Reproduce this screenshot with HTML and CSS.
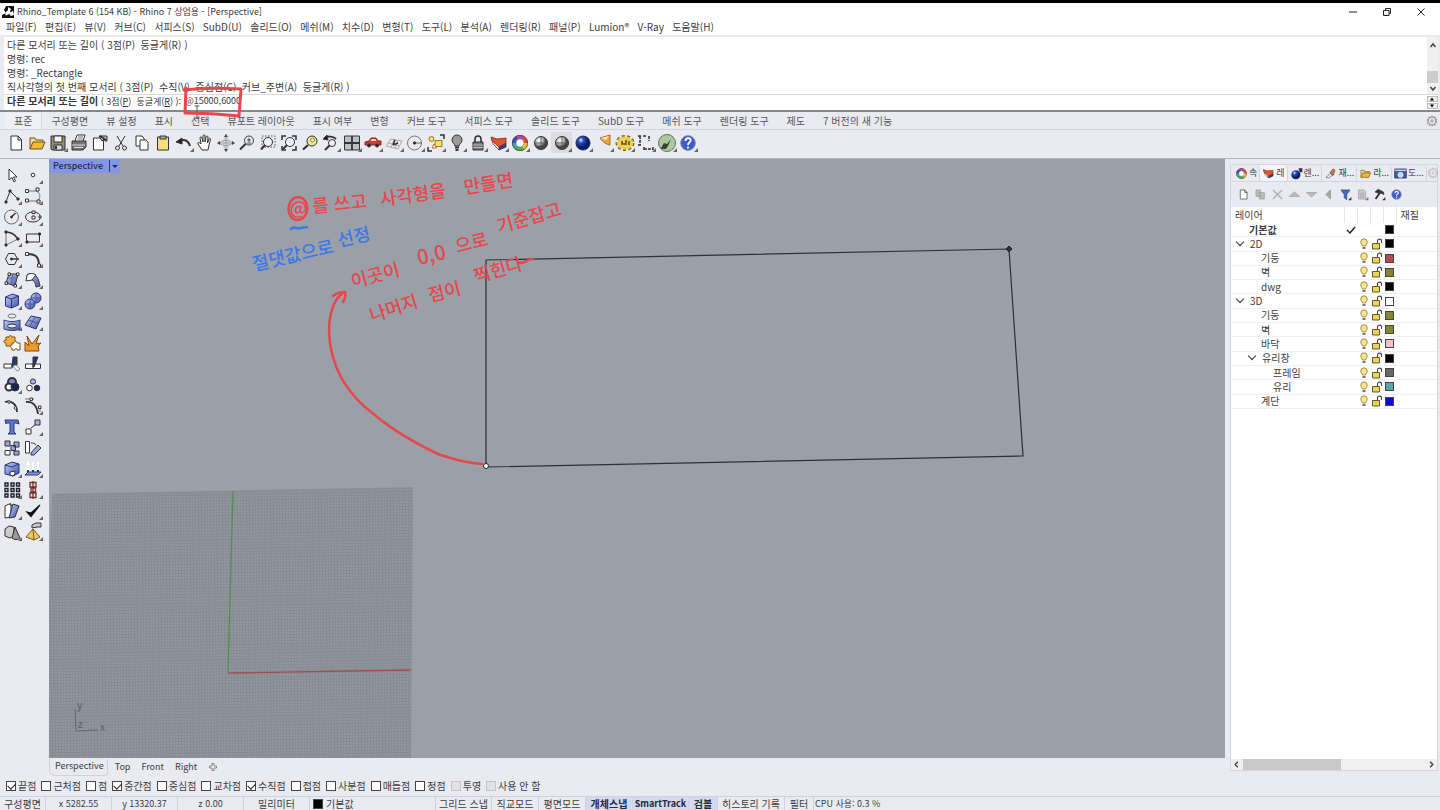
FILE: index.html
```
<!DOCTYPE html>
<html lang="ko">
<head>
  <meta charset="UTF-8">
  <meta name="viewport" content="width=device-width, initial-scale=1.0">
  <title>Rhino_Template 6 (154 KB) - Rhino 7 상업용 - [Perspective]</title>
  <link rel="stylesheet" href="styles.css">
</head>
<body>
  <!-- shared icons -->
  <svg class="defs" width="0" height="0">
    <symbol id="wheel" viewBox="0 0 20 20">
      <g fill="none" stroke-width="4">
        <circle cx="10" cy="10" r="6" stroke="#e0453a"/>
        <circle cx="10" cy="10" r="6" stroke="#e9c93c" pathLength="6" stroke-dasharray="1 5"/>
        <circle cx="10" cy="10" r="6" stroke="#4cb54a" pathLength="6" stroke-dasharray="1 5" stroke-dashoffset="-1"/>
        <circle cx="10" cy="10" r="6" stroke="#35a9b5" pathLength="6" stroke-dasharray="1 5" stroke-dashoffset="-2"/>
        <circle cx="10" cy="10" r="6" stroke="#3c50c8" pathLength="6" stroke-dasharray="1 5" stroke-dashoffset="-3"/>
        <circle cx="10" cy="10" r="6" stroke="#b545ae" pathLength="6" stroke-dasharray="1 5" stroke-dashoffset="-4"/>
      </g>
      <circle cx="10" cy="10" r="7.6" fill="none" stroke="#444" stroke-width=".7"/>
      <circle cx="10" cy="10" r="4" fill="#fff" stroke="#777" stroke-width=".6"/>
    </symbol>
    <symbol id="wedge" viewBox="0 0 20 20">
      <path d="M4 10l6 7 7-3v-4l-7 3z" fill="#2b3f9c" stroke="#222" stroke-width=".7"/>
      <path d="M3 6l7 7v4L4 11z" fill="#eee" stroke="#222" stroke-width=".6"/>
      <path d="M2 4l6 2 9-1v5l-7 4-7-6z" fill="#e2562c" stroke="#722" stroke-width=".8"/>
    </symbol>
    <symbol id="folder" viewBox="0 0 20 20">
      <path d="M3 16V5h5l1 2h7v3" fill="#f6dc8c" stroke="#6b5417"/>
      <path d="M3 16l3-7h12l-3 7z" fill="#f2b83c" stroke="#6b5417"/>
    </symbol>
    <symbol id="help" viewBox="0 0 20 20">
      <circle cx="10" cy="10" r="7.4" fill="#3f5cc4" stroke="#8794c9"/>
      <path d="M7.5 8c0-4 5.500-3.500 5.200-.5C12.500 9.500 10 9.500 10 12M10 13.500v2" fill="none" stroke="#fff" stroke-width="1.800"/>
    </symbol>
    <symbol id="bulb" viewBox="0 0 12 12">
      <path d="M4.500 8C4 6.500 2.800 6 2.800 4a3.200 3.200 0 0 1 6.400 0c0 2-1.200 2.500-1.700 4z" fill="#f8e68c" stroke="#8a7430" stroke-width=".8"/>
      <path d="M4.500 9h3v2h-3z" fill="#777"/>
    </symbol>
    <symbol id="unlock" viewBox="0 0 12 12">
      <path d="M1.500 5.500h7v5.500h-7z" fill="#ecd35c" stroke="#54481a" stroke-width=".9"/>
      <path d="M6.500 5V3c0-2.500 4-2.500 4 0v2" fill="none" stroke="#444" stroke-width="1.100"/>
    </symbol>
    <symbol id="gear" viewBox="0 0 12 12">
      <circle cx="6" cy="6" r="4.500" fill="none" stroke="#999" stroke-width="1.500" stroke-dasharray="2 .8"/>
      <circle cx="6" cy="6" r="3.700" fill="none" stroke="#999" stroke-width=".8"/>
      <circle cx="6" cy="6" r="1.200" fill="none" stroke="#999"/>
    </symbol>
    <linearGradient id="blue" x2="1" y2="1"><stop offset="0" stop-color="#c6d0fa"/><stop offset="1" stop-color="#3c51ab"/></linearGradient>
    <radialGradient id="ball" cx=".35" cy=".3"><stop offset="0" stop-color="#fff"/><stop offset=".6" stop-color="#b5b5b5"/><stop offset="1" stop-color="#444"/></radialGradient>
    <radialGradient id="blueball" cx=".35" cy=".3"><stop offset="0" stop-color="#dbe8ff"/><stop offset=".4" stop-color="#2751c0"/><stop offset="1" stop-color="#071d68"/></radialGradient>
  </svg>

  <header class="titlebar">
    <svg class="logo" viewBox="0 0 12 12"><path d="M0 0h12v12H0z" fill="#111"/><path d="M0 0h4L2 4l2 3-4 2zM6 1l3 2-1 3 3-1 1 4-3 1-2-2-4 2 1-4 2-2z" fill="#fff"/><path d="M3 9l3 2H2zM8 4l2 1-1 1z" fill="#111"/></svg>
    <span class="title">Rhino_Template 6 (154 KB) - Rhino 7 상업용 - [Perspective]</span>
    <div class="window-buttons">
      <button aria-label="최소화"><svg viewBox="0 0 10 10"><path d="M1 5h8"/></svg></button>
      <button aria-label="이전 크기로"><svg viewBox="0 0 10 10"><path d="M1.500 3.500h5.500v5H1.500zM3.500 3V1.500h5v5H7"/></svg></button>
      <button aria-label="닫기"><svg viewBox="0 0 10 10"><path d="M1.500 1.500l7 7M8.500 1.500l-7 7"/></svg></button>
    </div>
  </header>

  <div class="menubar">
    <nav class="menu">
      <a href="#">파일(F)</a><a href="#">편집(E)</a><a href="#">뷰(V)</a><a href="#">커브(C)</a><a href="#">서피스(S)</a><a href="#">SubD(U)</a><a href="#">솔리드(O)</a><a href="#">메쉬(M)</a><a href="#">치수(D)</a><a href="#">변형(T)</a><a href="#">도구(L)</a><a href="#">분석(A)</a><a href="#">렌더링(R)</a><a href="#">패널(P)</a><a href="#">Lumion®</a><a href="#">V-Ray</a><a href="#">도움말(H)</a>
    </nav>
  </div>

  <section class="command">
    <div class="history-row">
      <div class="history">
        <p>다른 모서리 또는 길이 ( 3점(P)&nbsp; 둥글게(R) )</p>
        <p>명령: rec</p>
        <p>명령: _Rectangle</p>
        <p>직사각형의 첫 번째 모서리 ( 3점(P)&nbsp; 수직(V)&nbsp; 중심점(C)&nbsp; 커브_주변(A)&nbsp; 둥글게(R) )</p>
      </div>
      <div class="vscroll">
        <svg viewBox="0 0 12 8"><path d="M3.500 6L6 3l2.500 3"/></svg>
        <div class="thumb"></div>
        <svg viewBox="0 0 12 8"><path d="M3.500 2L6 5l2.500-3"/></svg>
      </div>
    </div>
    <div class="prompt">
      <label for="cmd"><b>다른 모서리 또는 길이</b> ( 3점(<u>P</u>)&nbsp; 둥글게(<u>R</u>) ):</label>
      <input id="cmd" type="text" value="@15000,6000">
      <div class="spin">
        <button aria-label="위"><svg viewBox="0 0 8 4"><path d="M2 3.500L4 .5l2 3z"/></svg></button>
        <button aria-label="아래"><svg viewBox="0 0 8 4"><path d="M2 .5L4 3.500l2-3z"/></svg></button>
      </div>
    </div>
    <svg class="mark" viewBox="180 84 66 40">
      <path d="M195 106h4M195 118h4M197 106v12" stroke="#555" stroke-width="1"/>
      <path d="M184 90c18-2 38-2 57-1l-2 27c-18-2-36-3-54-3l1-25" stroke="#e5474c" stroke-width="3"/>
    </svg>
  </section>

  <nav class="tabs">
    <a href="#" class="active">표준</a><a href="#">구성평면</a><a href="#">뷰 설정</a><a href="#">표시</a><a href="#">선택</a><a href="#">뷰포트 레이아웃</a><a href="#">표시 여부</a><a href="#">변형</a><a href="#">커브 도구</a><a href="#">서피스 도구</a><a href="#">솔리드 도구</a><a href="#">SubD 도구</a><a href="#">메쉬 도구</a><a href="#">렌더링 도구</a><a href="#">제도</a><a href="#">7 버전의 새 기능</a>
    <svg class="tabs-gear"><use href="#gear"/></svg>
  </nav>

  <div class="toolbar">
    <button class="tool" aria-label="새로 만들기"><svg viewBox="0 0 20 20"><path d="M5 3h7l3.500 3.500V17H5zM12 3v4h3.500" fill="#fff"/></svg></button>
    <button class="tool" aria-label="열기"><svg><use href="#folder"/></svg></button>
    <button class="tool more" aria-label="저장"><svg viewBox="0 0 20 20"><path d="M3 3h14v14H4l-1-1z" fill="#8e8e6e"/><path d="M6 3h8v6H6z" fill="#f3f3f3"/><path d="M6 12h8v5H6z" fill="#ddd"/><path d="M8 13v3" stroke-width="2"/></svg></button>
    <button class="tool" aria-label="인쇄"><svg viewBox="0 0 20 20"><path d="M6 8l2-6h8l-2 6" fill="#fff"/><path d="M3 8h14v6l-3 3H3z" fill="#777"/><path d="M3 12h13M5 14.500h9" stroke="#ddd"/><path d="M9 4h5M8.500 6h5" stroke-width=".7"/></svg></button>
    <button class="tool" aria-label="문서 속성"><svg viewBox="0 0 20 20"><path d="M3.500 5h10v12h-10z" fill="#fff"/><path d="M9 3h8v5h-2l-1-2-2 2z" fill="#ccc"/><path d="M10 3l6 4" stroke-width="2"/></svg></button>
    <button class="tool" aria-label="잘라내기"><svg viewBox="0 0 20 20"><path d="M6 3l6 10M14 3L8 13"/><circle cx="6.500" cy="15" r="2"/><circle cx="13.500" cy="15" r="2"/></svg></button>
    <button class="tool" aria-label="복사"><svg viewBox="0 0 20 20"><path d="M4 3h6l2 2v8H4z" fill="#fff"/><path d="M8 7h6l2 2v8H8z" fill="#fff"/></svg></button>
    <button class="tool" aria-label="붙여넣기"><svg viewBox="0 0 20 20"><path d="M4.500 4h11v13h-11z" fill="#f5dc74"/><path d="M7 3h6v3H7z" fill="#aaa"/></svg></button>
    <button class="tool more" aria-label="실행 취소"><svg viewBox="0 0 20 20"><path d="M5 9c4-4 9-2 11 4" stroke-width="2"/><path d="M2 9l6-4v6z" fill="#222"/></svg></button>
    <button class="tool" aria-label="이동"><svg viewBox="0 0 20 20"><path d="M7 17l-4-6c-1-2 1-2 3 0L5 5c0-1.500 1.500-1.500 2 0l1 4V3c0-1.500 2-1.500 2 0v6l1-5c.5-1.500 2-1 2 0l-.5 6 1.500-4c.5-1.500 2-.5 1.500.5L14 12l-1 5z" fill="#fff"/></svg></button>
    <button class="tool" aria-label="뷰 회전"><svg viewBox="0 0 20 20"><path d="M10 3v14M3 10h14" stroke="#999"/><ellipse cx="10" cy="10" rx="6" ry="2.500" stroke="#999"/><ellipse cx="10" cy="10" rx="2.500" ry="6" stroke="#bbb"/><path d="M8 4l2-3 2 3zM8 16l2 3 2-3zM4 8l-3 2 3 2zM16 8l3 2-3 2z" fill="#444" stroke="none"/></svg></button>
    <button class="tool" aria-label="확대/축소"><svg viewBox="0 0 20 20"><circle cx="12" cy="7.500" r="4.500" fill="#eef"/><path d="M12 5v4M10 7h4M10 10h4" stroke-width=".9"/><path d="M8.500 11L3 16.500" stroke-width="2"/></svg></button>
    <button class="tool" aria-label="창 확대"><svg viewBox="0 0 20 20"><path d="M4 3h13v11H4z" stroke-dasharray="1.500 1.500" stroke="#555"/><circle cx="10" cy="9" r="4.500" fill="#eef"/><path d="M7 12l-4 4.500" stroke-width="2"/></svg></button>
    <button class="tool" aria-label="범위 확대"><svg viewBox="0 0 20 20"><path d="M3 7V3h4M13 3h4v4M17 13v4h-4M7 17H3v-4" stroke-width="1.500"/><circle cx="11" cy="9" r="4.500" fill="#eef"/><path d="M8 12l-4 4" stroke-width="2"/></svg></button>
    <button class="tool" aria-label="선택 확대"><svg viewBox="0 0 20 20"><circle cx="12" cy="8" r="5" fill="#e9ea9a"/><circle cx="12.500" cy="7" r="2" fill="#fff45e" stroke="#888"/><path d="M8 12l-5 4.500" stroke-width="2.200"/></svg></button>
    <button class="tool more" aria-label="뷰 실행 취소"><svg viewBox="0 0 20 20"><path d="M4 5c3-2 8-2 11 1" stroke-width="2"/><path d="M2 6l4-4 1 5z" fill="#222"/><circle cx="11" cy="10" r="3.500" fill="#eef"/><path d="M8.500 12.500L4 17" stroke-width="2"/></svg></button>
    <button class="tool more" aria-label="4개 뷰포트"><svg viewBox="0 0 20 20"><path d="M2.500 3h15v14h-15z" fill="#bcc0c6"/><path d="M10 3v14M2.500 10h15" stroke-width="1.800"/></svg></button>
    <button class="tool more" aria-label="오른쪽 뷰"><svg viewBox="0 0 20 20"><path d="M2 12V9l4-1 2-3h5l2 3h3v4z" fill="#d6392f" stroke="#822"/><path d="M8.500 6h4l1 2h-6z" fill="#f6caca" stroke="none"/><circle cx="6" cy="12.500" r="1.500" fill="#222"/><circle cx="14" cy="12.500" r="1.500" fill="#222"/></svg></button>
    <button class="tool more" aria-label="구성평면 설정"><svg viewBox="0 0 20 20"><path d="M2 13l5-7 11 2-4 8zM4.500 10l11 3M10 6.500L7 14.500M14 7.500L11 15" stroke="#aaa"/><path d="M9 12l2-5M9 12l5-2" stroke-width="1.500"/></svg></button>
    <button class="tool more" aria-label="개체 스냅"><svg viewBox="0 0 20 20"><circle cx="9.500" cy="10" r="7" stroke="#777"/><path d="M9.500 10H17" stroke="#666"/><circle cx="9.500" cy="10" r="1.200" fill="#333"/></svg></button>
    <button class="tool more" aria-label="선택"><svg viewBox="0 0 20 20"><path d="M14 2h4v4M2 14v4h4" stroke-width="1.500"/><path d="M9 7.500h7v6H9z" fill="#f4df67" stroke="#997a1c"/><circle cx="5.500" cy="6" r="2.500" fill="#f6e26c" stroke="#997a1c"/><path d="M6 15l2-4 2.500 4z" fill="#fff" stroke="#c66b24"/></svg></button>
    <button class="tool more" aria-label="숨기기"><svg viewBox="0 0 20 20"><path d="M8 13c0-2-3-3-3-6a5 5 0 0 1 10 0c0 3-3 4-3 6z" fill="#9a9a9a"/><path d="M8 14.500h4M8.500 17h3" stroke-width="1.800"/></svg></button>
    <button class="tool more" aria-label="잠금"><svg viewBox="0 0 20 20"><path d="M5 9h10v8H5z" fill="#777"/><path d="M7 9V6c0-4 6-4 6 0v3" stroke-width="1.600"/><path d="M5 12h10M5 14.500h10" stroke="#ccc" stroke-width=".8"/></svg></button>
    <button class="tool more" aria-label="레이어"><svg><use href="#wedge"/></svg></button>
    <button class="tool more" aria-label="속성"><svg><use href="#wheel"/></svg></button>
    <button class="tool" aria-label="음영"><svg viewBox="0 0 20 20"><circle cx="10" cy="10" r="6.500" fill="url(#ball)"/><path d="M10 3.500v13M3.500 10h13" stroke="#555" stroke-width=".8"/></svg></button>
    <button class="tool more on" aria-label="음영 모드"><svg viewBox="0 0 20 20"><circle cx="10" cy="10" r="6.500" fill="url(#ball)"/><path d="M10 3.500v13M3.500 10h13" stroke="#555" stroke-width=".8"/></svg></button>
    <button class="tool more" aria-label="렌더링"><svg viewBox="0 0 20 20"><circle cx="10" cy="10" r="7" fill="url(#blueball)" stroke="#172b6a"/></svg></button>
    <button class="tool more" aria-label="스포트라이트"><svg viewBox="0 0 20 20"><path d="M6 5l10-3v10c-3 0-7-3-10-7z" fill="#eda43a" stroke="#97702e"/><path d="M7 5l8-2-3 4z" fill="#fae9bb" stroke="none"/></svg></button>
    <button class="tool more" aria-label="옵션"><svg viewBox="0 0 20 20"><ellipse cx="10" cy="10" rx="8" ry="6.500" stroke="#7a651d" stroke-width="3" stroke-dasharray="3 2.100"/><ellipse cx="10" cy="10" rx="7.500" ry="6" fill="#efd158" stroke="#e8c440" stroke-width="1.500" stroke-dasharray="3 1.800"/><path d="M7 8v3h3M11 7v5M14 8v4" stroke="#665315" stroke-width="1.600"/></svg></button>
    <button class="tool more" aria-label="치수"><svg viewBox="0 0 20 20"><path d="M4 3v9M2 3h4M2 12h4M7 3h3M13 3v5M8 16h9M8 14v4M17 14v4" stroke-width="1.500" stroke-dasharray="3 1"/></svg></button>
    <button class="tool more" aria-label="Grasshopper"><svg viewBox="0 0 20 20"><circle cx="10" cy="10" r="8.500" fill="#adc99d" stroke="#657065"/><path d="M4 15l3-5 3 1 4-5-3 7-2 3H5z" fill="#37413a" stroke="none"/></svg></button>
    <button class="tool more" aria-label="도움말"><svg><use href="#help"/></svg></button>
  </div>

  <main class="work">
    <aside class="sidebar">
      <button class="tool" aria-label="선택"><svg viewBox="0 0 20 20"><path d="M7 4v11l3-2.500 2 4.500 1.500-1-2-4H15z" fill="#fff"/></svg></button>
      <button class="tool more" aria-label="점"><svg viewBox="0 0 20 20"><circle cx="10" cy="10" r="1.800" fill="#fff"/></svg></button>
      <button class="tool more" aria-label="폴리라인"><svg viewBox="0 0 20 20"><path d="M4 16l4-11 8 8"/><path d="M3 15h2v2H3zM7 4h2v2H7zM15 12h2v2h-2z" fill="#333"/></svg></button>
      <button class="tool more" aria-label="커브"><svg viewBox="0 0 20 20"><path d="M4 5h9c5 2 5 8 1 10H5" stroke="#777"/><path d="M2.500 3.500h3v3h-3zM13 2h3v3h-3zM2.500 13h3v3h-3zM14 14h3v3h-3z" fill="#fff"/></svg></button>
      <button class="tool more" aria-label="원"><svg viewBox="0 0 20 20"><circle cx="9.500" cy="10" r="7" stroke="#666"/><path d="M9.500 10l4-4" stroke-width="1.500"/><circle cx="9.500" cy="10" r="1" fill="#333"/></svg></button>
      <button class="tool more" aria-label="타원"><svg viewBox="0 0 20 20"><ellipse cx="10" cy="10" rx="7.500" ry="5"/><path d="M9 9h3v3H9zM9 4h3v2.500H9zM16 9h2v2h-2z" fill="#fff"/></svg></button>
      <button class="tool more" aria-label="호"><svg viewBox="0 0 20 20"><path d="M4 4c7 0 10 4 12 7" stroke-width="1.500"/><path d="M4 4v13l12-6" stroke="#777"/><path d="M3 3h2v2H3zM15 10h2v2h-2zM3 16h2v2H3z" fill="#333"/></svg></button>
      <button class="tool more" aria-label="사각형"><svg viewBox="0 0 20 20"><path d="M3.500 6h13v8h-13z"/><path d="M3 13h2v2H3zM15.500 5h2v2h-2z" fill="#333"/></svg></button>
      <button class="tool more" aria-label="다각형"><svg viewBox="0 0 20 20"><path d="M3.500 10L6.500 4.500h6L15.500 10l-3 5.500h-6z"/><path d="M9 10h8" stroke-width="1.400"/><circle cx="9.500" cy="10" r="1" fill="#333"/></svg></button>
      <button class="tool more" aria-label="필릿"><svg viewBox="0 0 20 20"><path d="M4 5c8 0 12 2 12 12" stroke-width="1.900"/><path d="M2.500 3.500h3v3h-3zM14.500 15h3v3h-3z" fill="#fff"/></svg></button>
      <button class="tool more" aria-label="서피스"><svg viewBox="0 0 20 20"><path d="M7 4h9l-3 12-9-3z" fill="url(#blue)"/><path d="M11 4l-2 11M6 8h9" stroke="#667"/><path d="M6 3h2.500v2.500H6zM14.500 3H17v2.500h-2.500zM3 12h2.500v2.500H3zM12 14.500h2.500V17H12z" fill="#fff"/></svg></button>
      <button class="tool more" aria-label="돌출"><svg viewBox="0 0 20 20"><path d="M4 5c4-3 11-2 13 11l-4 1C12 10 9 9 5 10z" fill="url(#blue)"/><path d="M4 5c3-2 6-2 9 0L9 10l-6 1z" fill="#fff"/></svg></button>
      <button class="tool more" aria-label="상자"><svg viewBox="0 0 20 20"><path d="M3.500 6l7-3 6 2v9l-7 3-6-2z" fill="url(#blue)" stroke="#27357c"/><path d="M3.500 6l6 2v9M9.500 8l7-3" stroke="#27357c"/></svg></button>
      <button class="tool more" aria-label="부울"><svg viewBox="0 0 20 20"><circle cx="13" cy="7" r="5" fill="url(#blue)" stroke="#26357c"/><circle cx="7" cy="13" r="5" fill="url(#blue)" stroke="#26357c"/><path d="M2 13h10M7 8v10M13 2v9M9 7h9" stroke="#33448f" stroke-width=".7"/></svg></button>
      <button class="tool more" aria-label="투영"><svg viewBox="0 0 20 20"><ellipse cx="10" cy="4" rx="4" ry="2" stroke="#777"/><path d="M2 8c5 2 11 2 16 0v9c-5 2-11 2-16 0z" fill="url(#blue)" stroke="#33417a"/><ellipse cx="10" cy="14" rx="4.500" ry="2" fill="#dfe5fb"/></svg></button>
      <button class="tool more" aria-label="메쉬"><svg viewBox="0 0 20 20"><path d="M2 13l6-9 10 2-5 11z" fill="url(#blue)" stroke="#2d376b"/><path d="M5 8l10 3M12 5l-5 9" stroke="#4b568c"/></svg></button>
      <button class="tool" aria-label="결합"><svg viewBox="0 0 20 20"><path d="M4 4h3c0-2 3-2 3 0h3v4c2 0 2 3 0 3v2H4v-3c-3 0-3-3 0-3z" fill="#efae3c" stroke="#7b5112"/><path d="M10 10h2c0-2 3-2 3 0h3v7h-3c0-2-2-2-2 0h-3v-2c-2 0-2-3 0-3z" fill="#fff" stroke="#7b5112"/></svg></button>
      <button class="tool" aria-label="분해"><svg viewBox="0 0 20 20"><path d="M2 18V9l4 4L4 3l5 8 7-9-3 9 5-1-3 3 1 5z" fill="#ee9a31" stroke="#7b4a11"/></svg></button>
      <button class="tool" aria-label="트림"><svg viewBox="0 0 20 20"><path d="M2 10h8v4H2z" fill="#fff"/><path d="M11 3h4v8l-5 2z" fill="#26347e"/><path d="M11 12l3-1 4 4-3 2z" fill="#fff" stroke="#888"/></svg></button>
      <button class="tool" aria-label="분할"><svg viewBox="0 0 20 20"><path d="M2.500 10h15v4.500h-15z" fill="#fff"/><path d="M10 3h5l-4 10h-1z" fill="#26347e"/><path d="M10 10v4.500"/></svg></button>
      <button class="tool more" aria-label="그룹"><svg viewBox="0 0 20 20"><circle cx="10" cy="7" r="4" fill="#7c89cf" stroke-width="2"/><circle cx="7" cy="12" r="3.500" fill="#fff" stroke-width="2"/><circle cx="13" cy="12" r="4" fill="#1a2252"/></svg></button>
      <button class="tool" aria-label="그룹 해제"><svg viewBox="0 0 20 20"><circle cx="10" cy="6.500" r="2.600" fill="#a9b2e8"/><circle cx="6.500" cy="13" r="2.800" fill="#fff"/><circle cx="14" cy="13" r="2.800" fill="#1e2860"/></svg></button>
      <button class="tool" aria-label="커브 편집"><svg viewBox="0 0 20 20"><path d="M3 6c6-2 12 2 12 10" stroke-width="1.800"/><circle cx="7" cy="6" r="1.300" fill="#fff"/><circle cx="13.500" cy="12" r="1.300" fill="#fff"/></svg></button>
      <button class="tool more" aria-label="점 편집"><svg viewBox="0 0 20 20"><path d="M3 6c7-1 11 4 12 12" stroke-width="1.800"/><path d="M2 3h9M17 10v6" stroke="#777"/><path d="M7 2h2.500v2.500H7zM15.500 10H18v2.500h-2.500z" fill="#fff"/></svg></button>
      <button class="tool" aria-label="텍스트"><svg viewBox="0 0 20 20"><path d="M3 3h13l1 4-3-1h-2v9l2 2H6l2-2V6H5L4 7z" fill="#6076cd" stroke="#27357b"/></svg></button>
      <button class="tool more" aria-label="이동"><svg viewBox="0 0 20 20"><path d="M12 3h5v5h-5z" fill="#a8b2e3"/><path d="M3 12h5v5H3z" fill="#fff"/><path d="M8 11l4-3"/></svg></button>
      <button class="tool" aria-label="블록"><svg viewBox="0 0 20 20"><path d="M3 3h5v5H3zM12 4h5v5h-5zM9 7.500h4.500v5H9zM12 13h5v4h-5z" fill="#98a4df"/><path d="M3 12.500h5V17H3z" fill="#fff"/></svg></button>
      <button class="tool" aria-label="회전"><svg viewBox="0 0 20 20"><path d="M2.500 3.500h4V15h-4z" fill="#fff"/><path d="M8 15l7-8 3 3-7 7H8z" fill="#9aa8e6"/><path d="M8 5c2 0 4 0 5 2"/></svg></button>
      <button class="tool more" aria-label="솔리드 편집"><svg viewBox="0 0 20 20"><path d="M3 6l7-3 7 2v9l-6 3-8-2z" fill="url(#blue)" stroke="#27357c"/><path d="M3 6l7 2 7-3" stroke="#27357c"/><path d="M8 13l5-1v3l-2 2-3-1z" fill="#fff"/></svg></button>
      <button class="tool more" aria-label="배열"><svg viewBox="0 0 20 20"><path d="M5 3v9M10 3v9M15 3v9" stroke="#fff" stroke-width="2"/><path d="M2 16l3-3h13l-3 3z" fill="#8a99de" stroke="#27357c"/><path d="M4 12h2M9 12h2M14 12h2" stroke-width="2"/></svg></button>
      <button class="tool more" aria-label="격자 배열"><svg viewBox="0 0 20 20"><path d="M3 3h3v3H3zM9 3h3v3H9zM14.500 3h3v3h-3zM3 8.500h3v3H3zM9 8.500h3v3H9zM14.500 8.500h3v3h-3zM3 14h3v3H3zM9 14h3v3H9zM14.500 14h3v3h-3z" fill="#ccd" stroke="#223" stroke-width="1.400"/></svg></button>
      <button class="tool more" aria-label="정렬"><svg viewBox="0 0 20 20"><path d="M7 2.500h6v4.500H7zM8 8h4.500v4H8zM7 13h6v4.500H7zM10 1v18" fill="#f1dede" stroke="#713232" stroke-width="1.300"/></svg></button>
      <button class="tool more" aria-label="변형"><svg viewBox="0 0 20 20"><path d="M3 5l4-2 2 1v12l-6 1z" fill="#fff"/><path d="M11 3l6 2-4 11-6 1z" fill="url(#blue)"/><path d="M8 2l2 3"/></svg></button>
      <button class="tool more" aria-label="검사"><svg viewBox="0 0 20 20"><path d="M4 11l4 4.500L17 4l-9 8z" fill="#111" stroke="#111" stroke-width="1.200"/></svg></button>
      <button class="tool more" aria-label="도형"><svg viewBox="0 0 20 20"><path d="M3 7l4-3 5 1v9l-4 2-5-2z" fill="#ccc"/><path d="M13 5l5 11c-2 2-6 2-8 0z" fill="#999"/></svg></button>
      <button class="tool more" aria-label="피라미드"><svg viewBox="0 0 20 20"><path d="M10 7l7 8-6 3-8-3z" fill="#f0c760" stroke="#765b1e"/><path d="M10 7l1 11" stroke="#765b1e"/><path d="M9 3l4-2h5v4h-4l-5 1z" fill="#ccc"/></svg></button>
    </aside>

    <section class="viewport">
      <button class="view-title">Perspective <span class="caret"></span></button>
      <svg class="scene" viewBox="49 159 1176 599" preserveAspectRatio="xMinYMin slice">
        <defs>
          <pattern id="grid" width="3" height="3" patternUnits="userSpaceOnUse" patternTransform="rotate(-1)">
            <rect width="3" height="3" fill="#92979f"/>
            <path d="M0 .5h3M.5 0v3" stroke="#868b93"/>
          </pattern>
        </defs>
        <path d="M52 494l361-7-2 271H49V600z" fill="url(#grid)"/>
        <path d="M233 491l-5 182" stroke="#4f8f4c" stroke-width="1.300"/>
        <path d="M228 673l183-3" stroke="#a04e50" stroke-width="1.300"/>
        <path d="M75 709l1 22 22-1" stroke="#62666e" fill="none"/>
        <g class="axis"><text x="77" y="709">y</text><text x="78" y="728">z</text><text x="100" y="731">x</text></g>
        <path d="M486 260l523-11 14 207-537 11z" fill="none" stroke="#2e3034" stroke-width="1.200"/>
        <circle cx="486" cy="466" r="2.500" fill="#fff" stroke="#222"/>
        <path d="M1009 246l3 3-3 3-3-3z" fill="#333" stroke="#222"/>
        <g class="pen red">
          <text transform="translate(290 215) rotate(-3)">@</text>
          <text transform="translate(313 213) rotate(-6)">를 쓰고</text>
          <text transform="translate(381 206) rotate(-8)">사각형을</text>
          <text transform="translate(465 194) rotate(-9)">만들면</text>
          <text transform="translate(353 288) rotate(-15)">이곳이</text>
          <text transform="translate(419 265) rotate(-13)" class="big">0,0</text>
          <text transform="translate(457 253) rotate(-14)">으로</text>
          <text transform="translate(499 233) rotate(-16)">기준잡고</text>
          <text transform="translate(372 322) rotate(-18)">나머지</text>
          <text transform="translate(430 302) rotate(-14)">점이</text>
          <text transform="translate(476 283) rotate(-16)">찍힌다</text>
        </g>
        <g class="pen blue">
          <text transform="translate(254 271) rotate(-13)">절댓값으로</text>
          <text transform="translate(339 247) rotate(-13)">선정</text>
        </g>
        <g class="ink">
          <path d="M298 197c-12 1-13 22-1 23 13 0 14-22 1-23" stroke="#e5474c"/>
          <path d="M482 464c-16-1-30-5-44-10-25-12-44-23-62-38-30-22-46-50-47-85 0-15 4-31 13-37M333 296c4-3 7-4 12-4 1 4 0 7-2 10" stroke="#e5474c"/>
          <path d="M520 263c4 1 7-4 13-4" stroke="#e5474c"/>
          <path d="M291 229c4-4 6 1 9-1 3-1 5 0 7-1" stroke="#3a78e8"/>
        </g>
      </svg>
    </section>

    <aside class="panel">
      <nav class="panel-tabs">
        <a href="#"><svg><use href="#wheel"/></svg>속</a>
        <a href="#" class="active"><svg><use href="#wedge"/></svg>레</a>
        <a href="#"><svg viewBox="0 0 20 20"><circle cx="9" cy="12" r="7" fill="url(#blueball)"/><path d="M13 2h6v6h-4z" fill="#333"/></svg>렌...</a>
        <a href="#"><svg viewBox="0 0 20 20"><path d="M3 16l7-6 3 3-6 4z" fill="#eee" stroke="#555"/><path d="M9 9l5-6 3 2-3 8z" fill="#cf7657" stroke="#63301d"/></svg>재...</a>
        <a href="#"><svg><use href="#folder"/></svg>라...</a>
        <a href="#"><svg viewBox="0 0 20 20"><path d="M1 3h18v14H1z" fill="#405cab" stroke="#223"/><path d="M1 5h18" stroke="#dde" stroke-width="2"/><circle cx="10" cy="12" r="4" fill="#c9d2f5" stroke="#eee"/></svg>도...</a>
        <svg class="panel-gear"><use href="#gear"/></svg>
      </nav>
      <div class="panel-tools">
        <button aria-label="새 레이어"><svg viewBox="0 0 20 20"><path d="M5 3h7l3.500 3.500V17H5zM12 3v4h3.500" fill="#fff"/></svg></button>
        <button aria-label="복제"><svg viewBox="0 0 20 20"><path d="M3 3h7v10H3zM8 7h8v10H8z" fill="#bbb" stroke="#999"/></svg></button>
        <button aria-label="삭제"><svg viewBox="0 0 20 20"><path d="M3 3l14 14M17 3L3 17" stroke="#b5b5b8" stroke-width="2.500"/></svg></button>
        <button aria-label="위로"><svg viewBox="0 0 20 20"><path d="M2 13l8-7 8 7z" fill="#bbb" stroke="#999"/></svg></button>
        <button aria-label="아래로"><svg viewBox="0 0 20 20"><path d="M2 7l8 7 8-7z" fill="#bbb" stroke="#999"/></svg></button>
        <button aria-label="왼쪽"><svg viewBox="0 0 20 20"><path d="M13 3v14l-7-7z" fill="#aaa" stroke="#888"/></svg></button>
        <button aria-label="필터"><svg viewBox="0 0 20 20"><path d="M3 3h14l-5 7v8l-4-3v-5z" fill="#4b69bd" stroke="#263c83"/><path d="M19 14v5h-5z" fill="#333" stroke="none"/></svg></button>
        <button aria-label="목록"><svg viewBox="0 0 20 20"><path d="M4 3h8l3 3v11H4z" fill="#ccc" stroke="#999"/><path d="M6 8h7M6 11h7M6 14h7" stroke="#999"/><path d="M19 14v5h-5z" fill="#777" stroke="none"/></svg></button>
        <button aria-label="도구"><svg viewBox="0 0 20 20"><path d="M3 6l5-4 8 4 1 4-5-2-1 1z" fill="#333"/><path d="M10 8l-6 9" stroke-width="3"/><path d="M19 14v5h-5z" fill="#333" stroke="none"/></svg></button>
        <button aria-label="도움말"><svg><use href="#help"/></svg></button>
      </div>
      <div class="layers">
        <table>
          <thead>
            <tr><th class="name">레이어</th><th class="c"></th><th class="c"></th><th class="c"></th><th class="c"></th><th>재질</th></tr>
          </thead>
          <tbody>
            <tr><td class="l1"><b>기본값</b></td><td><svg viewBox="0 0 12 12"><path d="M2 6l3 3 5-6" fill="none" stroke="#222" stroke-width="1.500"/></svg></td><td></td><td></td><td><i class="swatch black"></i></td><td></td></tr>
            <tr><td class="l1 open">2D</td><td></td><td><svg><use href="#bulb"/></svg></td><td><svg><use href="#unlock"/></svg></td><td><i class="swatch black"></i></td><td></td></tr>
            <tr><td class="l2">기둥</td><td></td><td><svg><use href="#bulb"/></svg></td><td><svg><use href="#unlock"/></svg></td><td><i class="swatch brick"></i></td><td></td></tr>
            <tr><td class="l2">벽</td><td></td><td><svg><use href="#bulb"/></svg></td><td><svg><use href="#unlock"/></svg></td><td><i class="swatch olive"></i></td><td></td></tr>
            <tr><td class="l2">dwg</td><td></td><td><svg><use href="#bulb"/></svg></td><td><svg><use href="#unlock"/></svg></td><td><i class="swatch black"></i></td><td></td></tr>
            <tr><td class="l1 open">3D</td><td></td><td><svg><use href="#bulb"/></svg></td><td><svg><use href="#unlock"/></svg></td><td><i class="swatch white"></i></td><td></td></tr>
            <tr><td class="l2">기둥</td><td></td><td><svg><use href="#bulb"/></svg></td><td><svg><use href="#unlock"/></svg></td><td><i class="swatch olive"></i></td><td></td></tr>
            <tr><td class="l2">벽</td><td></td><td><svg><use href="#bulb"/></svg></td><td><svg><use href="#unlock"/></svg></td><td><i class="swatch olive"></i></td><td></td></tr>
            <tr><td class="l2">바닥</td><td></td><td><svg><use href="#bulb"/></svg></td><td><svg><use href="#unlock"/></svg></td><td><i class="swatch pink"></i></td><td></td></tr>
            <tr><td class="l2 open">유리창</td><td></td><td><svg><use href="#bulb"/></svg></td><td><svg><use href="#unlock"/></svg></td><td><i class="swatch black"></i></td><td></td></tr>
            <tr><td class="l3">프레임</td><td></td><td><svg><use href="#bulb"/></svg></td><td><svg><use href="#unlock"/></svg></td><td><i class="swatch gray"></i></td><td></td></tr>
            <tr><td class="l3">유리</td><td></td><td><svg><use href="#bulb"/></svg></td><td><svg><use href="#unlock"/></svg></td><td><i class="swatch teal"></i></td><td></td></tr>
            <tr><td class="l2">계단</td><td></td><td><svg><use href="#bulb"/></svg></td><td><svg><use href="#unlock"/></svg></td><td><i class="swatch navy"></i></td><td></td></tr>
          </tbody>
        </table>
      </div>
      <div class="hscroll">
        <svg viewBox="0 0 12 12"><path d="M7 3L4 6l3 3"/></svg>
        <div class="track"><div class="thumb"></div></div>
        <svg viewBox="0 0 12 12"><path d="M5 3l3 3-3 3"/></svg>
      </div>
    </aside>
  </main>

  <nav class="view-tabs">
    <a href="#" class="active">Perspective</a><a href="#">Top</a><a href="#">Front</a><a href="#">Right</a>
    <button aria-label="뷰포트 추가"><svg viewBox="0 0 10 10"><path d="M4 1.500h2V4h2.500v2H6v2.500H4V6H1.500V4H4z" fill="#eee" stroke="#888"/></svg></button>
  </nav>

  <form class="osnap">
    <label><input type="checkbox" checked>끝점</label>
    <label><input type="checkbox">근처점</label>
    <label><input type="checkbox">점</label>
    <label><input type="checkbox" checked>중간점</label>
    <label><input type="checkbox">중심점</label>
    <label><input type="checkbox">교차점</label>
    <label><input type="checkbox" checked>수직점</label>
    <label><input type="checkbox">접점</label>
    <label><input type="checkbox">사분점</label>
    <label><input type="checkbox">매듭점</label>
    <label><input type="checkbox">정점</label>
    <label><input type="checkbox" disabled>투영</label>
    <label><input type="checkbox" disabled>사용 안 함</label>
  </form>

  <footer class="status">
    <button class="w-plane">구성평면</button>
    <span class="w-coord small">x 5282.55</span>
    <span class="w-coord small">y 13320.37</span>
    <span class="w-coord small">z 0.00</span>
    <span class="w-coord">밀리미터</span>
    <button class="w-layer"><i class="swatch black"></i>기본값</button>
    <button class="w-wide">그리드 스냅</button>
    <button class="w-mode">직교모드</button>
    <button class="w-mode">평면모드</button>
    <button class="w-mode active">개체스냅</button>
    <button class="w-wide small active">SmartTrack</button>
    <button class="w-short active">검볼</button>
    <button class="w-history">히스토리 기록</button>
    <button class="w-short">필터</button>
    <span class="cpu small">CPU 사용: 0.3 %</span>
  </footer>
</body>
</html>
```
FILE: styles.css
```
* {
  box-sizing: border-box;
}
body {
  display: flex;
  flex-direction: column;
  height: 100vh;
  margin: 0;
  border-top: 3px solid #000;
  background-color: #eaebf1;
  color: #3c3d42;
  font-family: "Noto Sans CJK KR", sans-serif;
  font-size: 10px;
  line-height: 14px;
  overflow: hidden;
}
.defs {
  position: absolute;
}
a {
  color: inherit;
  text-decoration: none;
  white-space: nowrap;
}
button, input {
  margin: 0;
  padding: 0;
  border: none;
  background: none;
  color: inherit;
  font: inherit;
}
svg {
  display: block;
  flex: none;
}

/* title and menu */
.titlebar {
  display: flex;
  align-items: center;
  height: 17px;
  padding: 0 11px 0 2px;
  background-color: #fff;
}
.logo {
  width: 12px;
  height: 12px;
  margin-right: 3px;
}
.title {
  flex: 1;
  font-size: 9px;
}
.window-buttons {
  display: flex;
  gap: 24px;
  padding-right: 3px;
}
.window-buttons svg {
  width: 10px;
  height: 10px;
  fill: none;
  stroke: #222;
}
.menubar {
  padding: 0 6px 1px;
  background-color: #fff;
}
.menu {
  display: flex;
  justify-content: space-between;
  max-width: 708px;
}

/* command line */
.command {
  position: relative;
  padding: 2px 2px 0 4px;
  border-bottom: 2px solid #85868e;
}
.history-row {
  display: flex;
}
.history {
  flex: 1;
  padding: 1px 3px 0;
  background-color: #fff;
}
.history p {
  margin: 0;
}
.vscroll {
  display: flex;
  flex-direction: column;
  justify-content: space-between;
  align-items: center;
  width: 11px;
  padding: 4px 0 1px;
  background-color: #f0f0f0;
}
.vscroll svg {
  width: 12px;
  height: 8px;
}
.vscroll svg, .hscroll svg {
  fill: none;
  stroke: #444;
  stroke-width: 1.5;
}
.vscroll .thumb {
  width: 11px;
  height: 12px;
  margin-top: auto;
  margin-bottom: 2px;
  background-color: #cdcdcd;
}
.prompt {
  display: flex;
  align-items: flex-start;
  height: 16px;
  padding-left: 3px;
  border-top: 1px solid #d8d8de;
  background-color: #fff;
  font-size: 9px;
  line-height: 12px;
}
.prompt label {
  color: #333;
}
.prompt b {
  font-size: 10px;
}
.prompt input {
  flex: 1;
  height: 12px;
  margin-left: 4px;
  outline: none;
}
.spin {
  display: flex;
  flex-direction: column;
  gap: 1px;
  padding-top: 1px;
}
.spin button {
  width: 11px;
  height: 6px;
  border: 1px solid #bbb;
  background-color: #eee;
}
.spin svg {
  width: 8px;
  height: 4px;
}
.mark {
  position: absolute;
  z-index: 2;
  top: 49px;
  left: 180px;
  width: 66px;
  height: 40px;
  fill: none;
  stroke-linecap: round;
  stroke-linejoin: round;
  pointer-events: none;
}

/* toolbar tabs */
.tabs {
  display: flex;
  gap: 18px;
  align-items: center;
  padding: 1px 2px 0 5px;
  border-bottom: 1px solid #d3d4dc;
  color: #55565c;
}
.tabs a {
  padding: 1px 0;
}
.tabs .active {
  margin-right: -9px;
  padding: 1px 9px;
  border-right: 1px solid #d3d4dc;
  background-color: #eff0f5;
}
.tabs-gear, .panel-gear {
  width: 12px;
  height: 12px;
  margin-left: auto;
}
.toolbar {
  display: flex;
  padding: 2px 5px 5px;
  border-bottom: 1px solid #b3b5c6;
}
.tool {
  position: relative;
  display: flex;
  align-items: center;
  justify-content: center;
  width: 21px;
  height: 21px;
}
.tool svg {
  width: 20px;
  height: 20px;
  fill: none;
  stroke: #333;
}
.tool.on {
  background-color: #dcdce0;
}
.more::after {
  content: "";
  position: absolute;
  right: 0;
  bottom: 1px;
  border-bottom: 4px solid #666;
  border-left: 4px solid transparent;
}

/* work area */
.work {
  display: flex;
  flex: 1;
  min-height: 0;
}
.sidebar {
  display: grid;
  grid-template-columns: 21px 21px;
  align-content: start;
  flex: none;
  width: 49px;
  padding: 5px 1px 0;
}
.viewport {
  position: relative;
  display: flex;
  flex: 1;
  min-width: 0;
  background-color: #9ba0a8;
}
.view-title {
  position: absolute;
  top: 0;
  left: 0;
  display: flex;
  align-items: center;
  gap: 6px;
  height: 14px;
  padding: 0 2px 0 4px;
  background-color: #8496e6;
  color: #252a4c;
  font-size: 9px;
  font-weight: 500;
}
.caret {
  padding-left: 2px;
  border-left: 1px solid #333c70;
  line-height: 12px;
}
.caret::before {
  content: "";
  display: inline-block;
  border-top: 3px solid #222850;
  border-right: 3px solid transparent;
  border-left: 3px solid transparent;
  vertical-align: middle;
}
.scene {
  flex: 1;
  width: 100%;
  height: 100%;
}
.axis {
  fill: #5a5e66;
  font-size: 10px;
}
.pen {
  font-size: 18px;
  font-weight: 500;
}
.pen .big {
  font-size: 20px;
}
.red {
  fill: #e5474c;
}
.blue {
  fill: #3a78e8;
}
.ink {
  fill: none;
  stroke-width: 2.5;
  stroke-linecap: round;
  stroke-linejoin: round;
}

/* layer panel */
.panel {
  display: flex;
  flex-direction: column;
  flex: none;
  width: 208px;
  margin: 5px 2px -13px 5px;
  border: 1px solid #d5d6de;
}
.panel-tabs {
  display: flex;
  align-items: center;
  height: 17px;
  padding-left: 2px;
  border-bottom: 1px solid #d3d4dc;
  font-size: 9px;
}
.panel-tabs a {
  display: flex;
  align-items: center;
  gap: 1px;
  height: 16px;
  padding: 0 2px;
  border-right: 1px solid #d3d4dc;
  border-radius: 0 5px 0 0;
}
.panel-tabs a svg {
  width: 13px;
  height: 13px;
}
.panel-tabs .active {
  background-color: #f5f5f9;
}
.panel-tabs .panel-gear {
  opacity: .5;
}
.panel-tools {
  display: flex;
  padding: 6px 4px;
}
.panel-tools button {
  display: flex;
  justify-content: center;
  width: 17px;
}
.panel-tools svg {
  width: 13px;
  height: 13px;
  fill: none;
  stroke: #333;
}
.layers {
  flex: 1;
  background-color: #fff;
}
table {
  width: 100%;
  height: 202px;
  border-collapse: collapse;
  table-layout: fixed;
}
th, td {
  padding: 0;
  border-bottom: 1px solid #f1f1f4;
  line-height: 12px;
  text-align: left;
}
th {
  height: 16px;
  padding-left: 4px;
  border-right: 1px solid #e6e6ea;
  border-bottom: none;
  font-weight: 400;
}
th:last-child {
  border-right: none;
}
.name {
  width: 113px;
}
.c {
  width: 13px;
}
td svg {
  width: 12px;
  height: 12px;
  margin: 0 auto;
}
.l1 {
  padding-left: 18px;
}
.l2 {
  padding-left: 30px;
}
.l3 {
  padding-left: 42px;
}
.open::before {
  content: "";
  display: inline-block;
  width: 5px;
  height: 5px;
  margin: 0 7px 3px -12px;
  border-right: 1px solid #333;
  border-bottom: 1px solid #333;
  transform: rotate(45deg);
}
.swatch {
  display: block;
  width: 9px;
  height: 9px;
  margin: 0 auto;
  border: 1px solid #444;
}
.black { background-color: #000; }
.white { background-color: #fff; }
.brick { background-color: #b34d4d; }
.olive { background-color: #85852b; }
.pink { background-color: #f0c4c4; }
.gray { background-color: #676767; }
.teal { background-color: #5aa5ac; }
.navy { background-color: #0909dc; }
.hscroll {
  display: flex;
  align-items: center;
  background-color: #f0f0f0;
}
.hscroll svg {
  width: 12px;
  height: 11px;
}
.track {
  flex: 1;
}
.hscroll .thumb {
  width: 54%;
  height: 11px;
  background-color: #c9c9c9;
}

/* bottom bars */
.view-tabs {
  display: flex;
  align-items: center;
  gap: 11px;
  height: 18px;
  padding-left: 49px;
  font-size: 9px;
}
.view-tabs .active {
  margin-right: -4px;
  padding: 0 3px 2px 5px;
  border: 1px solid #d0d1da;
  border-top: none;
  border-radius: 0 0 4px 6px;
}
.view-tabs svg {
  width: 10px;
  height: 10px;
}
.osnap {
  display: flex;
  gap: 5px;
  height: 20px;
  padding: 0 6px;
}
.osnap label {
  display: flex;
  align-items: center;
  gap: 2px;
  white-space: nowrap;
}
.osnap input {
  appearance: none;
  display: flex;
  width: 10px;
  height: 10px;
  border: 1px solid #444;
  background-color: #fff;
}
.osnap input:checked::before {
  content: "";
  width: 7px;
  height: 4px;
  margin: 1px 0 0 1px;
  border-bottom: 1px solid #222;
  border-left: 1px solid #222;
  transform: rotate(-45deg);
}
.osnap input:disabled {
  border-color: #c4c4c8;
  background-color: #e2e2e4;
}
.status {
  display: flex;
  height: 14px;
  border-top: 1px solid #d0d1da;
}
.status > * {
  flex: none;
  border-right: 1px solid #d0d1da;
  text-align: center;
  white-space: nowrap;
}
.status .small {
  font-size: 9px;
}
.status .active {
  background-color: #d5d9ef;
  color: #26283c;
  font-weight: 700;
}
.w-plane { width: 46px; }
.w-coord { width: 66px; }
.w-mode { width: 47px; }
.w-wide { width: 56px; }
.w-short { width: 29px; }
.w-history { width: 67px; }
.status .w-layer {
  display: flex;
  align-items: center;
  gap: 3px;
  width: 126px;
  padding-left: 3px;
}
.w-layer .swatch {
  width: 10px;
  height: 10px;
  margin: 0;
}
.status .cpu {
  padding-left: 1px;
  border-right: none;
}
```
